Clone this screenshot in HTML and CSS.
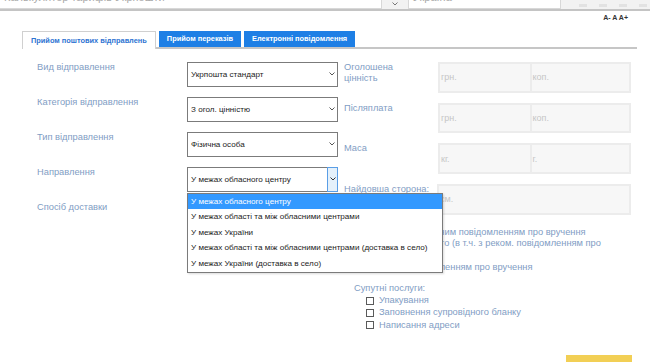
FILE: index.html
```html
<!DOCTYPE html>
<html>
<head>
    <title>Калькулятор тарифів</title>
    <link rel="stylesheet" href="styles.css">
</head>
<body>
    <div class="topbar">
        <div class="addr"><span>Калькулятор тарифів Укрпошти</span></div>
        <div class="addr-btn">
            <svg width="6" height="4" viewBox="0 0 6 4"><polyline points="0.5,0.5 3,3 5.5,0.5" fill="none" stroke="#777" stroke-width="1"/></svg>
        </div>
        <div class="search"><span>Україна</span></div>
        <div class="tb-icons">
            <i></i><i></i><i></i><i></i>
        </div>
    </div>

    <div class="page">
        <div class="font-size">A- A A+</div>

        <div class="tabs">
            <div class="tab active">Прийом поштових відправлень</div>
            <div class="tab">Прийом переказів</div>
            <div class="tab">Електронні повідомлення</div>
        </div>

        <div class="calc">
            <div class="col-left">
                <div class="row">
                    <label>Вид відправлення</label>
                    <div class="select">
                        <span>Укрпошта стандарт</span>
                        <span class="arrow"><svg width="6" height="4" viewBox="0 0 6 4"><polyline points="0.5,0.5 3,3 5.5,0.5" fill="none" stroke="#555" stroke-width="1"/></svg></span>
                    </div>
                </div>
                <div class="row">
                    <label>Категорія відправлення</label>
                    <div class="select">
                        <span>З огол. цінністю</span>
                        <span class="arrow"><svg width="6" height="4" viewBox="0 0 6 4"><polyline points="0.5,0.5 3,3 5.5,0.5" fill="none" stroke="#555" stroke-width="1"/></svg></span>
                    </div>
                </div>
                <div class="row">
                    <label>Тип відправлення</label>
                    <div class="select">
                        <span>Фізична особа</span>
                        <span class="arrow"><svg width="6" height="4" viewBox="0 0 6 4"><polyline points="0.5,0.5 3,3 5.5,0.5" fill="none" stroke="#555" stroke-width="1"/></svg></span>
                    </div>
                </div>
                <div class="row">
                    <label>Направлення</label>
                    <div class="select open">
                        <span>У межах обласного центру</span>
                        <span class="arrow"><svg width="6" height="4" viewBox="0 0 6 4"><polyline points="0.5,0.5 3,3 5.5,0.5" fill="none" stroke="#333" stroke-width="1"/></svg></span>
                        <ul class="dropdown">
                            <li class="selected">У межах обласного центру</li>
                            <li>У межах області та між обласними центрами</li>
                            <li>У межах України</li>
                            <li>У межах області та між обласними центрами (доставка в село)</li>
                            <li>У межах України (доставка в село)</li>
                        </ul>
                    </div>
                </div>
                <div class="row">
                    <label>Спосіб доставки</label>
                    <div class="select">
                        <span>Адреса - адреса</span>
                        <span class="arrow"><svg width="6" height="4" viewBox="0 0 6 4"><polyline points="0.5,0.5 3,3 5.5,0.5" fill="none" stroke="#555" stroke-width="1"/></svg></span>
                    </div>
                </div>
            </div>

            <div class="col-right">
                <div class="field">
                    <label>Оголошена<br>цінність</label>
                    <div class="inputs">
                        <div class="inp">грн.</div>
                        <div class="inp">коп.</div>
                    </div>
                </div>
                <div class="field">
                    <label>Післяплата</label>
                    <div class="inputs">
                        <div class="inp">грн.</div>
                        <div class="inp">коп.</div>
                    </div>
                </div>
                <div class="field">
                    <label>Маса</label>
                    <div class="inputs">
                        <div class="inp">кг.</div>
                        <div class="inp">г.</div>
                    </div>
                </div>
                <div class="field">
                    <label class="nowrap">Найдовша сторона:</label>
                    <div class="inputs">
                        <div class="inp wide">см.</div>
                    </div>
                </div>
            </div>
        </div>

        <div class="delivery">
            <div>Доставка за вказаною адресою з рекомендованим повідомленням про вручення</div>
            <div>Вручення адресатові або представнику особисто (в т.ч. з реком. повідомленням про</div>
            <div>вручення)</div>
            <div class="gap">Вручення адресату на дому з простим повідомленням про вручення</div>
        </div>

        <div class="extras">
            <div class="extras-title">Супутні послуги:</div>
            <div class="check"><span class="box"></span>Упакування</div>
            <div class="check"><span class="box"></span>Заповнення супровідного бланку</div>
            <div class="check"><span class="box"></span>Написання адреси</div>
        </div>

        <div class="actions">
            <button class="calc-btn">Розрахувати</button>
        </div>
    </div>
</body>
</html>
```

FILE: styles.css
```css
* {
    margin: 0px;
    padding: 0px;
    box-sizing: border-box;
}
html {
    overflow: hidden;
}
body {
    font-family: "Liberation Sans", Arial, sans-serif;
    background: #fff;
    color: #333;
}

/* browser strip at the top */
.topbar {
    height: 11px;
    display: flex;
    background: #f2f2f2;
    border-bottom: 2px solid #c4c4c4;
    overflow: hidden;
}
.topbar .addr {
    width: 382px;
    height: 9px;
    background: #fff;
    border-right: 1px solid #d8d8d8;
    border-bottom: 1px solid #d8d8d8;
    overflow: hidden;
}
.topbar .addr span,
.topbar .search span {
    display: block;
    margin-top: -9px;
    padding-left: 4px;
    font-size: 11px;
    line-height: 12px;
    color: #aaa;
}
.topbar .addr-btn {
    width: 26px;
    display: flex;
    justify-content: center;
    align-items: flex-end;
    padding-bottom: 3px;
}
.topbar .search {
    width: 153px;
    height: 9px;
    background: #fff;
    border: 1px solid #d8d8d8;
    border-top: none;
    overflow: hidden;
}
.topbar .tb-icons {
    display: flex;
    gap: 12px;
    margin-left: 18px;
    align-items: flex-end;
    padding-bottom: 2px;
}
.topbar .tb-icons i {
    width: 8px;
    height: 3px;
    background: #e2e2e2;
}

.page {
    padding: 0 13px 0 22px;
}
.font-size {
    margin-top: 2px;
    padding-right: 9px;
    text-align: right;
    font-size: 7px;
    line-height: 10px;
    font-weight: bold;
    color: #333;
}

/* tabs */
.tabs {
    display: flex;
    align-items: flex-start;
    gap: 3px;
    height: 18px;
    margin-top: 8px;
    border-bottom: 2px solid #c6c6c6;
}
.tab {
    height: 16px;
    line-height: 16px;
    padding: 0 8px;
    font-size: 7.4px;
    font-weight: bold;
    background: #1e7fe5;
    color: #fff;
    white-space: nowrap;
}
.tab.active {
    height: 18px;
    line-height: 17px;
    margin-bottom: -2px;
    background: #fff;
    color: #2e74d2;
    border: 1px solid #d0d0d0;
    border-bottom: none;
}

/* form */
.calc {
    display: flex;
    margin-top: 13px;
}
.col-left {
    width: 316px;
    padding-left: 15px;
}
.row {
    display: flex;
    height: 24.6px;
    margin-bottom: 10.4px;
}
.row:last-child {
    margin-bottom: 0;
}
.row label,
.field label {
    width: 150px;
    font-size: 9.3px;
    line-height: 11px;
    color: #7f9dc4;
}
.select {
    position: relative;
    width: 151px;
    height: 24.6px;
    display: flex;
    align-items: center;
    justify-content: space-between;
    padding-left: 3px;
    border: 1px solid #7b7b7b;
    background: #fff;
    font-size: 8.1px;
    color: #1a1a1a;
}
.select .arrow {
    width: 11px;
    height: 100%;
    display: flex;
    align-items: center;
    justify-content: center;
}
.select.open .arrow {
    height: calc(100% + 2px);
    margin: -1px -1px -1px 0;
    background: #e5f1fb;
    border: 1px solid #5a9ee6;
}
.dropdown {
    position: absolute;
    left: -1px;
    top: calc(100% + 2px);
    width: 256px;
    list-style: none;
    background: #fff;
    border: 1px solid #7b7b7b;
    box-shadow: 1px 1px 2px rgba(0, 0, 0, 0.15);
    z-index: 5;
}
.dropdown li {
    height: 15.6px;
    line-height: 15.6px;
    padding-left: 3px;
    font-size: 8.1px;
    color: #1a1a1a;
    white-space: nowrap;
}
.dropdown li.selected {
    background: #3399ff;
    color: #fff;
}

.col-right {
    margin-left: 6px;
}
.field {
    display: flex;
    height: 30.5px;
    margin-bottom: 10.2px;
}
.field label {
    width: 94px;
    line-height: 10.6px;
}
.field label.nowrap {
    white-space: nowrap;
}
.inputs {
    display: flex;
    width: 193px;
}
.inp {
    width: 93.5px;
    height: 100%;
    display: flex;
    align-items: center;
    padding-left: 1px;
    background: #f7f7f7;
    border: 2px solid #ececec;
    font-size: 9px;
    color: #c6c6c6;
}
.inp + .inp {
    flex: 1;
    border-left: none;
}
.inp.wide {
    width: 195px;
    margin-left: -1px;
}

.delivery {
    padding-left: 215px;
    font-size: 9.3px;
    line-height: 11.4px;
    color: #7f9dc4;
    white-space: nowrap;
}
.delivery .gap {
    margin-top: 1.5px;
}

.extras {
    margin-top: 9.7px;
    padding-left: 332px;
    font-size: 9.3px;
    line-height: 11px;
    color: #7f9dc4;
}
.extras .check {
    display: flex;
    align-items: center;
    height: 12.4px;
    margin-left: 12px;
}
.extras .box {
    width: 8px;
    height: 8px;
    margin-right: 5px;
    border: 1px solid #5a5a5a;
    background: #fff;
}

.actions {
    display: flex;
    justify-content: flex-end;
    margin-top: 23px;
    padding-right: 4.7px;
}
.calc-btn {
    width: 66.6px;
    height: 26px;
    border: none;
    background: #f2cf55;
    font-family: "Liberation Sans", Arial, sans-serif;
    font-size: 10px;
    color: #333;
}
```
